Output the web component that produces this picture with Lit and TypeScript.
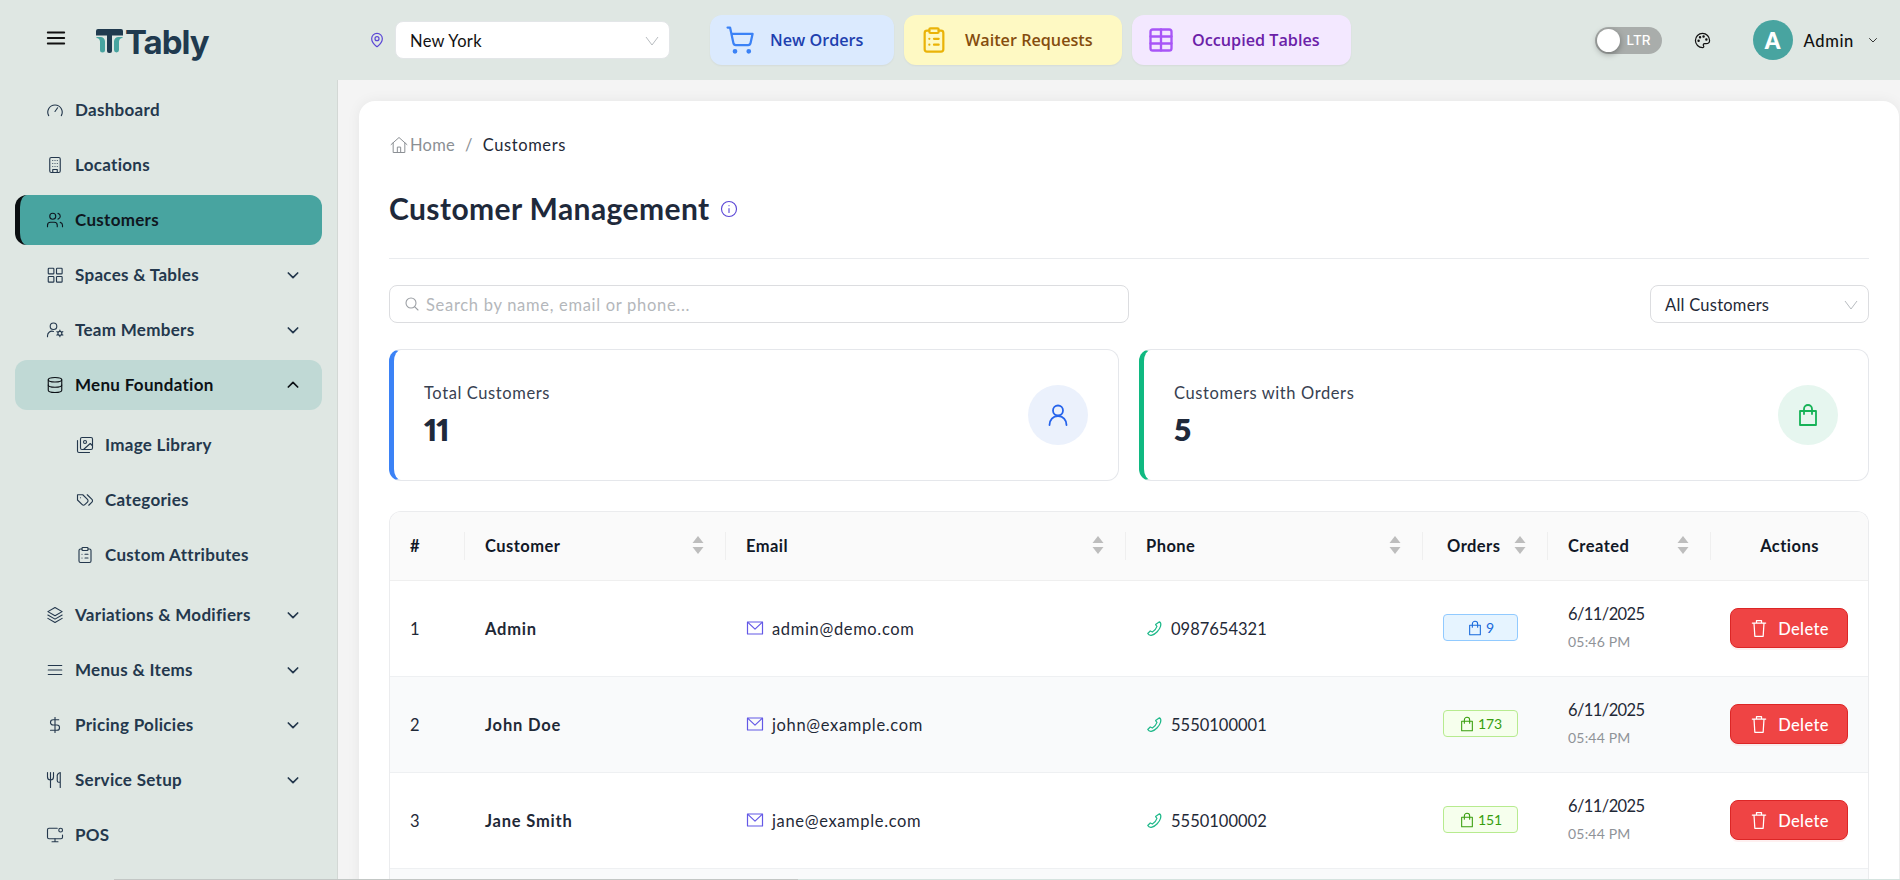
import { LitElement, html, css, svg } from "lit";
import { customElement } from "lit/decorators.js";

const ic = (inner: unknown, size = 16, sw = 1.6) => html`<svg class="ic" width=${size} height=${size} viewBox="0 0 24 24" fill="none" stroke="currentColor" stroke-width=${sw} stroke-linecap="round" stroke-linejoin="round">${inner}</svg>`;

const P = {
  gauge: svg`<path d="M3.6 19.5a9.6 9.6 0 1 1 16.8 0"/><path d="M12 14l3.5-5"/>`,
  building: svg`<rect x="5" y="2" width="14" height="20" rx="2"/><path d="M9 22v-4h6v4M9 6h.01M12 6h.01M15 6h.01M9 10h.01M12 10h.01M15 10h.01M9 14h.01M12 14h.01M15 14h.01"/>`,
  users: svg`<path d="M15 21v-2a4 4 0 0 0-4-4H6a4 4 0 0 0-4 4v2"/><circle cx="9" cy="7" r="4"/><path d="M22 21v-2a4 4 0 0 0-3-3.87M16 3.13a4 4 0 0 1 0 7.75"/>`,
  grid: svg`<rect x="3" y="3" width="7.5" height="7.5" rx="1"/><rect x="14" y="3" width="7.5" height="7.5" rx="1"/><rect x="3" y="14" width="7.5" height="7.5" rx="1"/><rect x="14" y="14" width="7.5" height="7.5" rx="1"/>`,
  team: svg`<circle cx="10" cy="7" r="4.4"/><path d="M2 21v-1.5a6 6 0 0 1 8-5.6"/><circle cx="18.5" cy="16.5" r="2.6"/><path d="M18.5 12v1.2M18.5 19.8V21M14.6 14.2l1 .6M21.4 18.2l1 .6M14.6 18.8l1-.6M21.4 14.8l1-.6"/>`,
  db: svg`<ellipse cx="12" cy="5" rx="9" ry="3"/><path d="M3 5v14c0 1.66 4 3 9 3s9-1.34 9-3V5"/><path d="M3 12c0 1.66 4 3 9 3s9-1.34 9-3"/>`,
  images: svg`<path d="M18 22H4a2 2 0 0 1-2-2V6"/><rect x="6" y="2" width="16" height="16" rx="2"/><circle cx="12" cy="8" r="2"/><path d="m22 13-3-3-9 8"/>`,
  tags: svg`<path d="M9 5H2v7l6.3 6.3a2.4 2.4 0 0 0 3.4 0l3.6-3.6a2.4 2.4 0 0 0 0-3.4L9 5Z"/><path d="M6 9.01V9"/><path d="m15 5 6.3 6.3a2.4 2.4 0 0 1 0 3.4L17 19"/>`,
  clip: svg`<rect x="8" y="2" width="8" height="4" rx="1"/><path d="M16 4h2a2 2 0 0 1 2 2v14a2 2 0 0 1-2 2H6a2 2 0 0 1-2-2V6a2 2 0 0 1 2-2h2"/><path d="M12 11h4M12 16h4M8 11h.01M8 16h.01"/>`,
  layers: svg`<path d="M12 2 2.5 7.5 12 13l9.5-5.5L12 2Z"/><path d="m2.5 12 9.5 5.5 9.5-5.5"/><path d="m2.5 16.5 9.5 5.5 9.5-5.5"/>`,
  menu: svg`<path d="M3 6h18M3 12h18M3 18h18"/>`,
  dollar: svg`<path d="M12 2v20"/><path d="M17 5H9.5a3.5 3.5 0 0 0 0 7h5a3.5 3.5 0 0 1 0 7H6"/>`,
  utensils: svg`<path d="M2 2v6a4 4 0 0 0 8 0V2M6 2v20M19 15V2a5 5 0 0 0-4 6v5a2 2 0 0 0 2 2h2Zm0 0v7"/>`,
  pos: svg`<path d="M15 3H4a2 2 0 0 0-2 2v10a2 2 0 0 0 2 2h16a2 2 0 0 0 2-2v-3"/><path d="M12 17v4M8 21h8"/><circle cx="19.5" cy="5.5" r="2.5"/>`,
  down: svg`<path d="m5 9 7 7 7-7"/>`,
  up: svg`<path d="m5 15 7-7 7 7"/>`,
  pin: svg`<path d="M20 10c0 5-5.5 10.2-7.4 11.8a1 1 0 0 1-1.2 0C9.5 20.2 4 15 4 10a8 8 0 0 1 16 0"/><circle cx="12" cy="10" r="3"/>`,
  cart: svg`<circle cx="8" cy="21" r="1"/><circle cx="19" cy="21" r="1"/><path d="M2.05 2.05h2l2.66 12.42a2 2 0 0 0 2 1.58h9.78a2 2 0 0 0 1.95-1.57l1.65-7.43H5.12"/>`,
  table: svg`<rect x="3" y="3" width="18" height="18" rx="2"/><path d="M3 9h18M3 15h18M12 3v18"/>`,
  palette: svg`<path d="M12 22a10 10 0 1 1 10-10c0 3-2.5 4.5-5 4.5h-2.2a1.8 1.8 0 0 0-1.3 3c.8 1 .2 2.5-1.5 2.5Z"/><circle cx="13.5" cy="6.5" r=".9" fill="currentColor"/><circle cx="17.5" cy="10.5" r=".9" fill="currentColor"/><circle cx="8.5" cy="7.5" r=".9" fill="currentColor"/><circle cx="6.5" cy="12.5" r=".9" fill="currentColor"/>`,
  home: svg`<path d="M2.5 11.5 12 3l9.5 8.5"/><path d="M5 9.5V21h14V9.5"/><path d="M10 21v-6.5h4V21"/>`,
  info: svg`<circle cx="12" cy="12" r="10"/><path d="M12 16.5v-5M12 7.5h.01"/>`,
  search: svg`<circle cx="10.5" cy="10.5" r="7.5"/><path d="m21 21-5.2-5.2"/>`,
  user: svg`<circle cx="12" cy="7.5" r="5"/><path d="M3.5 22c0-5 3.5-9 8.5-9s8.5 4 8.5 9"/>`,
  bag: svg`<path d="M4 8h16v14H4z"/><path d="M8 11V6a4 4 0 0 1 8 0v5"/>`,
  mail: svg`<rect x="2" y="4" width="20" height="16"/><path d="m2.5 4.5 9.5 9 9.5-9"/>`,
  phone: svg`<path d="M19 2.5c2 1 2.5 3 1.5 6.500C19 14 13.500 20 8.500 21.300c-2.800.7-5-.3-6-2.300l3.500-3.500 3 1.500c2.500-1.500 5.500-5 6.500-8l-2-2.500L19 2.500Z"/>`,
  trash: svg`<path d="M4 6h16M9 6V3h6v3M6 6l1 16h10l1-16"/>`,
};

type Nav = { t: string; i: unknown; c?: "down" | "up"; cls?: string };
const nav: Nav[] = [
  { t: "Dashboard", i: P.gauge },
  { t: "Locations", i: P.building },
  { t: "Customers", i: P.users, cls: "active" },
  { t: "Spaces & Tables", i: P.grid, c: "down" },
  { t: "Team Members", i: P.team, c: "down" },
  { t: "Menu Foundation", i: P.db, c: "up", cls: "open" },
];
const sub: Nav[] = [
  { t: "Image Library", i: P.images },
  { t: "Categories", i: P.tags },
  { t: "Custom Attributes", i: P.clip },
];
const nav2: Nav[] = [
  { t: "Variations & Modifiers", i: P.layers, c: "down" },
  { t: "Menus & Items", i: P.menu, c: "down" },
  { t: "Pricing Policies", i: P.dollar, c: "down" },
  { t: "Service Setup", i: P.utensils, c: "down" },
  { t: "POS", i: P.pos },
];
const rows = [
  { n: 1, name: "Admin", email: "admin@demo.com", phone: "0987654321", orders: "9", tone: "blue", time: "05:46 PM" },
  { n: 2, name: "John Doe", email: "john@example.com", phone: "5550100001", orders: "173", tone: "green", time: "05:44 PM" },
  { n: 3, name: "Jane Smith", email: "jane@example.com", phone: "5550100002", orders: "151", tone: "green", time: "05:44 PM" },
];

const sorter = html`<svg class="sort" width="12" height="18" viewBox="0 0 12 18"><path d="M6 0l5.500 7H.5z" fill="#bdbdbd"/><path d="M6 18l5.500-7H.5z" fill="#bdbdbd"/></svg>`;
const chevThin = html`<svg class="thin" width="14" height="10" viewBox="0 0 14 10" fill="none" stroke="#b8bcc0" stroke-width="1"><path d="M1 1l6 8 6-8"/></svg>`;

@customElement("app-root")
export class AppRoot extends LitElement {
  static styles = css`
    :host { display: block; width: 100%; height: 880px; overflow: hidden; font-family: "Lato", "Noto Sans", sans-serif; color: #1e293b; background: #dfe7e3; }
    * { box-sizing: border-box; }
    .ic { display: block; flex: none; }
    .page { height: 879px; display: flex; flex-direction: column; overflow: hidden; }
    .edge { height: 1px; background: linear-gradient(90deg, #dfe7e3 0 6%, #c3c7c5 6% 42%, #d5e3df 42% 100%); }
    header { height: 80px; flex: none; display: flex; align-items: center; padding-right: 21px; background: #dfe7e3; }
    .burger { margin-left: 45px; margin-top: -4px; color: #111; }
    .logo { margin-left: 29px; display: flex; align-items: center; gap: 2px; margin-top: 6px; width: 113px; flex: none; }
    .logo svg { flex: none; margin-top: -4px; }
    .logo span { font-size: 33px; font-weight: 700; letter-spacing: -1px; color: #203a4f; line-height: 40px; font-family: "Inter", sans-serif; margin-top: -2px; }
    .pin { margin-left: 160px; color: #5b47d6; }
    .select { background: #fff; border: 1px solid #e3e6e8; border-radius: 8px; height: 38px; display: flex; align-items: center; justify-content: space-between; padding: 2px 10px 0 14px; font-size: 16.500px; color: #111; letter-spacing: .3px; }
    .loc { width: 275px; margin-left: 10px; }
    .pills { display: flex; gap: 10px; margin-left: 40px; }
    .pill { height: 50px; border-radius: 12px; display: flex; align-items: center; font-family: "Open Sans", sans-serif; font-size: 16.200px; font-weight: 600; box-shadow: 0 1px 2px rgba(0,0,0,.05); }
    .pill.b { width: 184px; background: #dbeafe; color: #1e40af; padding-left: 15px; gap: 15px; }
    .pill.b .ic { color: #3b82f6; }
    .pill.y { width: 218px; background: #fef9c3; color: #854d0e; padding-left: 16px; gap: 17px; }
    .pill.y .ic { color: #eab308; }
    .pill.p { width: 219px; background: #f3e8ff; color: #6b21a8; padding-left: 15px; gap: 17px; }
    .pill.p .ic { color: #a855f7; }
    .right { margin-left: auto; display: flex; align-items: center; }
    .toggle { width: 67px; height: 27px; border-radius: 14px; background: #a9adab; position: relative; color: #fff; font-weight: 500; display: flex; align-items: center; justify-content: flex-end; padding-right: 11px; font-family: "Inter", sans-serif; font-size: 13.500px; }
    .knob { position: absolute; left: 2px; top: 2px; width: 23px; height: 23px; border-radius: 50%; background: #fff; box-shadow: 0 2px 6px rgba(0,0,0,.35); }
    .palette { margin-left: 32px; color: #111; }
    .avatar { margin-left: 42px; width: 40px; height: 40px; border-radius: 50%; background: #48a4a0; color: #fff; font-weight: 800; font-size: 22px; display: flex; align-items: center; justify-content: center; }
    .uname { margin-left: 11px; padding-top: 2px; font-size: 16.500px; font-weight: 500; color: #111; letter-spacing: .65px; }
    .uchev { margin-left: 13px; color: #222; }
    .body { flex: 1; min-height: 0; display: flex; }
    aside { width: 338px; flex: none; background: #dfe7e3; border-right: 1px solid #d3d8d5; padding: 5px 15px 0 15px; display: flex; flex-direction: column; gap: 5px; }
    .item { height: 50px; border-radius: 12px; display: flex; align-items: center; padding-left: 31px; padding-right: 21px; font-size: 17px; font-weight: 700; letter-spacing: .3px; color: #24384d; flex: none; }
    .item .lbl { margin-left: 11px; margin-top: -2px; flex: 1; }
    .item.active { background: #48a4a0; border-left: 5px solid #0b0f12; padding-left: 26px; color: #0f1720; }
    .item.open { background: #c0d9d5; color: #0c1116; }
    .subs { display: flex; flex-direction: column; gap: 5px; padding: 5px 0; flex: none; }
    .item.sub { padding-left: 61px; }
    .cv { color: #24384d; }
    .open .cv { color: #0c1116; }
    main { flex: 1; min-width: 0; background: #f4f4f4; padding: 21px 1px 0 21px; overflow: hidden; }
    .card { background: #fff; border-radius: 16px 16px 0 0; padding: 30px 30px 0; box-shadow: 0 0 14px rgba(0,0,0,.06); min-height: 900px; }
    .crumb { height: 28px; display: flex; align-items: center; font-size: 16.500px; color: #1f2937; letter-spacing: .25px; }
    .crumb .ic { color: #8b8f94; }
    .crumb .home { color: #8b8f94; margin-left: 1px; }
    .crumb .sep { color: #8b8f94; margin: 0 10px; }
    .crumb .cur { letter-spacing: .6px; }
    .title { margin-top: 30px; height: 40px; display: flex; align-items: center; gap: 10px; }
    h1 { margin: 0 0 2px; font-size: 30px; font-weight: 700; color: #1e293b; letter-spacing: .4px; }
    .title .ic { color: #5b47d6; }
    hr { margin: 29px 0 0; border: 0; border-top: 1px solid #e9ebee; }
    .tools { margin-top: 26px; display: flex; justify-content: space-between; }
    .search { width: 740px; height: 38px; border: 1px solid #dcdde0; border-radius: 8px; display: flex; align-items: center; padding: 2px 0 0 14px; gap: 6px; font-size: 16.500px; color: #b4b7bb; letter-spacing: .7px; }
    .search .ic { color: #9a9ea3; margin-top: -2px; }
    .filter { width: 219px; border-color: #dcdde0; color: #1f2937; letter-spacing: .25px; }
    .stats { margin-top: 26px; display: grid; grid-template-columns: 1fr 1fr; gap: 20px; }
    .stat { height: 132px; border: 1px solid #e5e7eb; border-radius: 12px; padding: 0 30px 0 30px; display: flex; align-items: center; justify-content: space-between; background: #fff; }
    .stat.b { border-left: 5px solid #3b82f6; }
    .stat.g { border-left: 5px solid #10b981; }
    .stat .lab { font-size: 16.500px; color: #374151; letter-spacing: .6px; line-height: 20px; }
    .stat .num { font-size: 31px; font-weight: 800; color: #1e293b; line-height: 36px; margin-top: 8px; font-variant-numeric: proportional-nums; letter-spacing: -1px; }
    .circle { width: 60px; height: 60px; border-radius: 50%; display: flex; align-items: center; justify-content: center; }
    .b .circle { background: #ebf1fc; color: #2563eb; }
    .g .circle { background: #e6f6ef; color: #16b257; }
    .tbl { margin-top: 30px; border: 1px solid #ebecee; border-bottom: 0; border-radius: 12px 12px 0 0; overflow: hidden; }
    table { width: 100%; border-collapse: collapse; table-layout: fixed; font-size: 16.500px; }
    .c1 { width: 75px; } .c2 { width: 261px; } .c3 { width: 400px; } .c4 { width: 297px; } .c5 { width: 125px; } .c6 { width: 163px; } 
    th { height: 68px; background: #fafafa; border-bottom: 1px solid #efefef; text-align: left; padding: 0 20px; font-weight: 700; color: #111827; position: relative; letter-spacing: .45px; }
    th::after { content: ""; position: absolute; right: 0; top: 20px; height: 28px; width: 1px; background: #efefef; }
    th:last-child::after { display: none; }
    th.act { text-align: center; }
    .hd { display: flex; align-items: center; justify-content: space-between; }
    .hd .sort { margin-top: -1px; margin-right: 2px; }
    th.o .hd { padding-right: 0; padding-left: 4px; }
    td { height: 96px; border-bottom: 1px solid #eef0f2; padding: 2px 20px 0; color: #1f2937; letter-spacing: .2px; }
    tr.alt td { background: #f9fafb; }
    .name { font-weight: 700; color: #1f2937; letter-spacing: .8px; }
    .with { display: flex; align-items: center; gap: 8px; }
    .em { letter-spacing: .65px; }
    .ph { letter-spacing: 0; }
    .with .mail { color: #6358e6; margin-top: -3px; }
    .with .tel { color: #1fb98a; margin-top: -2px; }
    .tag { width: 75px; height: 27px; margin-top: -3px; border-radius: 4px; border: 1px solid; display: flex; align-items: center; justify-content: center; gap: 3px; font-size: 14px; letter-spacing: -.2px; }
    .tag.blue { background: #e6f4ff; border-color: #91caff; color: #1668dc; }
    .tag.green { background: #f6ffed; border-color: #b7eb8f; color: #389e0d; }
    .dt { line-height: 22px; margin-top: -4px; letter-spacing: -.6px; }
    .tm { font-size: 14px; color: #8f9398; margin-top: 8px; line-height: 18px; }
    .del { width: 118px; height: 40px; margin-top: -2px; background: #ef4444; border: 1px solid #dc2626; border-radius: 8px; color: #fff; display: flex; align-items: center; justify-content: center; gap: 9px; font-family: inherit; font-size: 16.500px; font-weight: 500; letter-spacing: .35px; box-shadow: 0 2px 0 rgba(239,68,68,.08); padding: 2px 0 0; }
    .del .ic { margin-top: -2px; }
    td.ac { padding: 2px 19px 0; }
  `;

  private item(n: Nav, extra = "") {
    return html`<div class="item ${n.cls ?? ""} ${extra}">
      ${ic(n.i, 18, 1.5)}<span class="lbl">${n.t}</span>
      ${n.c ? html`<span class="cv">${ic(n.c === "up" ? P.up : P.down, 16, 2.6)}</span>` : ""}
    </div>`;
  }

  render() {
    return html`<div class="page">
      <header>
        <span class="burger">${ic(P.menu, 22, 2)}</span>
        <div class="logo">
          <svg width="27" height="24" viewBox="0 0 27 24"><path d="M2 0h23a2 2 0 0 1 2 2v4.500H16V22a2 2 0 0 1-2 2h-1a2 2 0 0 1-2-2V6.500H0V2a2 2 0 0 1 2-2z" fill="#203a4f"/><path d="M.5 8h4A4.500 4.500 0 0 1 9 12.500V21a2.500 2.500 0 0 1-5 0v-8.500A4 4 0 0 0 .5 9zM26.500 8h-4A4.500 4.500 0 0 0 18 12.500V21a2.500 2.500 0 0 0 5 0v-8.500A4 4 0 0 1 26.500 9z" fill="#48a4a0"/></svg>
          <span>Tably</span>
        </div>
        <span class="pin">${ic(P.pin, 16, 1.8)}</span>
        <div class="select loc">New York ${chevThin}</div>
        <div class="pills">
          <div class="pill b">${ic(P.cart, 30, 1.8)}<span>New Orders</span></div>
          <div class="pill y">${ic(P.clip, 28, 1.9)}<span>Waiter Requests</span></div>
          <div class="pill p">${ic(P.table, 28, 2)}<span>Occupied Tables</span></div>
        </div>
        <div class="right">
          <div class="toggle"><span class="knob"></span>LTR</div>
          <span class="palette">${ic(P.palette, 17, 1.7)}</span>
          <div class="avatar">A</div>
          <span class="uname">Admin</span>
          <span class="uchev">${ic(P.down, 12, 1.8)}</span>
        </div>
      </header>
      <div class="body">
        <aside>
          ${nav.map((n) => this.item(n))}
          <div class="subs">${sub.map((n) => this.item(n, "sub"))}</div>
          ${nav2.map((n) => this.item(n))}
        </aside>
        <main>
          <div class="card">
            <div class="crumb">${ic(P.home, 20, 1.2)}<span class="home">Home</span><span class="sep">/</span><span class="cur">Customers</span></div>
            <div class="title"><h1>Customer Management</h1>${ic(P.info, 18, 1.5)}</div>
            <hr />
            <div class="tools">
              <div class="search">${ic(P.search, 16, 1.6)}<span>Search by name, email or phone...</span></div>
              <div class="select filter">All Customers ${chevThin}</div>
            </div>
            <div class="stats">
              <div class="stat b"><div><div class="lab">Total Customers</div><div class="num">11</div></div><div class="circle">${ic(P.user, 24, 1.8)}</div></div>
              <div class="stat g"><div><div class="lab">Customers with Orders</div><div class="num">5</div></div><div class="circle">${ic(P.bag, 24, 1.8)}</div></div>
            </div>
            <div class="tbl">
              <table>
                <colgroup><col class="c1" /><col class="c2" /><col class="c3" /><col class="c4" /><col class="c5" /><col class="c6" /><col /></colgroup>
                <thead><tr>
                  <th>#</th>
                  <th><div class="hd">Customer ${sorter}</div></th>
                  <th><div class="hd">Email ${sorter}</div></th>
                  <th><div class="hd">Phone ${sorter}</div></th>
                  <th class="o"><div class="hd">Orders ${sorter}</div></th>
                  <th><div class="hd">Created ${sorter}</div></th>
                  <th class="act">Actions</th>
                </tr></thead>
                <tbody>
                  ${rows.map((r, i) => html`<tr class=${i % 2 ? "alt" : ""}>
                    <td>${r.n}</td>
                    <td class="name">${r.name}</td>
                    <td><div class="with em"><span class="mail">${ic(P.mail, 18, 1.6)}</span>${r.email}</div></td>
                    <td><div class="with ph"><span class="tel">${ic(P.phone, 17, 1.7)}</span>${r.phone}</div></td>
                    <td><div class="tag ${r.tone}">${ic(P.bag, 16, 1.6)}${r.orders}</div></td>
                    <td><div class="dt">6/11/2025</div><div class="tm">${r.time}</div></td>
                    <td class="ac"><button class="del">${ic(P.trash, 20, 1.5)}Delete</button></td>
                  </tr>`)}
                  <tr class="alt"><td colspan="7"></td></tr>
                </tbody>
              </table>
            </div>
          </div>
        </main>
      </div>
      </div>
      <div class="edge"></div>`;
  }
}
